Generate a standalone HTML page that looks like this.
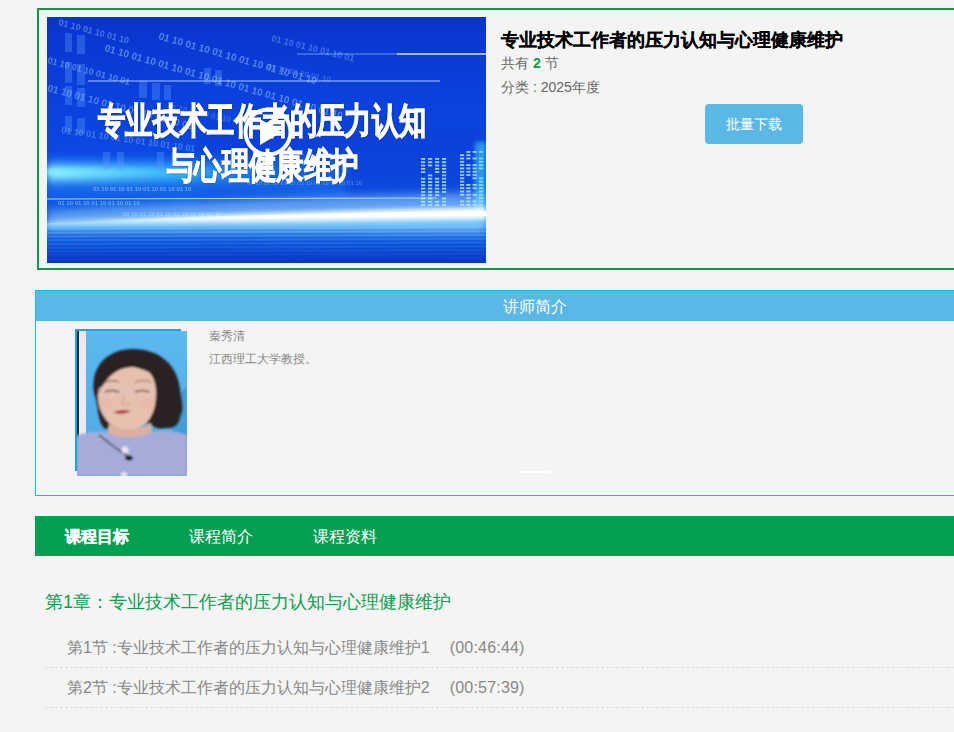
<!DOCTYPE html>
<html><head><meta charset="utf-8">
<style>
*{margin:0;padding:0;box-sizing:border-box}
html,body{width:954px;height:732px;overflow:hidden;background:#f4f4f4;font-family:"Liberation Sans",sans-serif}
.abs{position:absolute}
#topbox{position:absolute;left:37px;top:8px;width:1000px;height:262px;border:2px solid #0b9a4c}
#banner{position:absolute;left:47px;top:17px;width:439px;height:246px;background:#0a3fd8;overflow:hidden}
.title{position:absolute;left:501px;top:29px;font-size:18px;font-weight:bold;color:#000;-webkit-text-stroke:0.15px #000;white-space:nowrap;line-height:22px}
.cnt{position:absolute;left:501px;top:54px;font-size:14px;color:#666;white-space:nowrap;line-height:18px}
.cnt b{color:#0a9e50;font-size:14px}
.cat{position:absolute;left:501px;top:78px;font-size:14px;color:#666;white-space:nowrap;line-height:18px}
.btn{position:absolute;left:705px;top:104px;width:98px;height:40px;border-radius:4px;background:#5bb8e6;color:#fff;font-size:14px;line-height:40px;text-align:center}
#tbox{position:absolute;left:35px;top:290px;width:1000px;height:206px;border:1px solid #00c0f6}
#thead{position:absolute;left:0;top:0;width:100%;height:30px;background:#58b8e7;color:#fff;font-size:16px;line-height:32px;text-align:center}
.tname{position:absolute;left:209px;top:328px;font-size:12px;color:#888;line-height:16px}
.tdesc{position:absolute;left:209px;top:351px;font-size:12px;color:#888;line-height:16px}
#nav{position:absolute;left:35px;top:516px;width:1000px;height:40px;background:#03a052}
#nav span{position:absolute;top:1px;line-height:40px;font-size:16px;color:#fff}
.ch{position:absolute;left:45px;top:590px;font-size:18px;color:#0a9e50;line-height:24px;white-space:nowrap}
.sec{position:absolute;left:45px;width:1000px;height:40px;border-bottom:1px dashed #ddd;font-size:16px;color:#888;line-height:39px;padding-left:22px;white-space:nowrap}
.bt1,.bt2{position:absolute;color:#fff;font-weight:bold;font-size:36px;line-height:40px;white-space:nowrap;-webkit-text-stroke:1.2px #fff;text-shadow:0 0 3px rgba(0,20,90,0.6);transform-origin:0 0}
.bt1{left:51px;top:84px;transform:scaleX(0.76)}
.bt2{left:120px;top:129px;transform:scaleX(0.76)}
.play{position:absolute;left:194px;top:88px}
.tm{margin-left:20px;letter-spacing:0.2px}
</style></head><body>
<div id="topbox"></div>
<div id="banner"><svg width="439" height="246" viewBox="0 0 439 246">
<defs>
<linearGradient id="bg" x1="0" y1="0" x2="0" y2="1">
<stop offset="0" stop-color="#0a34cc"/><stop offset="0.3" stop-color="#0a40dc"/><stop offset="0.6" stop-color="#0b4ae2"/><stop offset="0.76" stop-color="#0d58e6"/><stop offset="1" stop-color="#0b3ac8"/>
</linearGradient>
<linearGradient id="low" x1="0" y1="0" x2="0" y2="1">
<stop offset="0" stop-color="#60c4ff"/><stop offset="0.3" stop-color="#3290f2"/><stop offset="0.65" stop-color="#1660e0"/><stop offset="1" stop-color="#0a34c0"/>
</linearGradient>
<linearGradient id="streak" x1="0" y1="0" x2="1" y2="0"><stop offset="0" stop-color="#d8ffff" stop-opacity="0.55"/><stop offset="0.45" stop-color="#fff" stop-opacity="0.9"/><stop offset="1" stop-color="#fff" stop-opacity="1"/></linearGradient>
<linearGradient id="cy" x1="0" y1="0" x2="1" y2="0"><stop offset="0" stop-color="#8ff4ff" stop-opacity="1"/><stop offset="0.55" stop-color="#40c8ff" stop-opacity="0.7"/><stop offset="1" stop-color="#2090ff" stop-opacity="0"/></linearGradient>
<filter id="b2" filterUnits="userSpaceOnUse" x="-50" y="-50" width="540" height="350"><feGaussianBlur stdDeviation="2"/></filter>
<filter id="b5" filterUnits="userSpaceOnUse" x="-50" y="-50" width="540" height="350"><feGaussianBlur stdDeviation="5"/></filter>
<filter id="b1" filterUnits="userSpaceOnUse" x="-50" y="-50" width="540" height="350"><feGaussianBlur stdDeviation="0.7"/></filter>
<filter id="b08" filterUnits="userSpaceOnUse" x="-50" y="-50" width="540" height="350"><feGaussianBlur stdDeviation="0.5"/></filter>
</defs>
<rect width="439" height="246" fill="url(#bg)"/>
<rect x="150" y="110" width="289" height="80" fill="#0838d0" opacity="0.35" filter="url(#b5)"/>
<rect x="0" y="140" width="300" height="40" fill="#1a78f0" opacity="0.5" filter="url(#b5)"/>
<rect x="0" y="148" width="260" height="16" fill="url(#cy)" filter="url(#b5)"/>
<rect x="0" y="152" width="200" height="6" fill="url(#cy)" opacity="0.8" filter="url(#b2)"/>
<g fill="#5a9cff" opacity="0.35" filter="url(#b08)">
<rect x="18" y="16" width="7" height="19"/><rect x="30" y="18" width="8" height="19"/>
<rect x="18" y="45" width="7" height="21"/><rect x="30" y="47" width="8" height="21"/>
<rect x="18" y="69" width="7" height="19"/><rect x="30" y="71" width="8" height="19"/>
<rect x="18" y="99" width="7" height="16"/><rect x="30" y="101" width="8" height="16"/>
<rect x="92" y="64" width="8" height="17"/><rect x="105" y="66" width="8" height="17"/><rect x="117" y="68" width="7" height="15"/>
<rect x="157" y="51" width="7" height="16"/><rect x="168" y="53" width="7" height="16"/>
<rect x="56" y="135" width="7" height="18"/><rect x="70" y="135" width="7" height="18"/><rect x="110" y="135" width="7" height="18"/><rect x="124" y="135" width="7" height="18"/>
</g>
<g fill="#9ccaff" font-family="Liberation Sans" font-weight="bold" filter="url(#b1)" opacity="0.85"><text x="11" y="8" transform="rotate(15 11 8)" font-size="9" opacity="0.5">01 10 01 10 01 10</text><text x="111" y="22" transform="rotate(16 111 22)" font-size="10" opacity="0.6">01 10 01 10 01 10 01 10 01 10 01 10</text><text x="57" y="34" transform="rotate(16 57 34)" font-size="10" opacity="0.6">01 10 01 10 01 10 01 10 01 10 01 10 01 10 01 10 01 10</text><text x="0" y="46" transform="rotate(15 0 46)" font-size="9" opacity="0.55">01 10 01 10 01 10 01 </text><text x="0" y="74" transform="rotate(15 0 74)" font-size="10" opacity="0.55">01 10 01 10 01 10 01 10 01 10 01 </text><text x="14" y="116" transform="rotate(8 14 116)" font-size="9" opacity="0.45">01 10 01 10 01 10 01 10 01 10 01 </text><text x="224" y="24" transform="rotate(14 224 24)" font-size="9" opacity="0.45">01 10 01 10 01 10 01 </text><text x="220" y="52" transform="rotate(12 220 52)" font-size="8" opacity="0.35">01 10 01 10 01 10</text><text x="120" y="92" transform="rotate(12 120 92)" font-size="8" opacity="0.35">01 10 01 10 01 10 01 10 01 10</text></g>
<g fill="#bfe0ff" font-family="Liberation Sans" font-weight="bold" filter="url(#b08)"><text x="46" y="174" font-size="6" opacity="0.5">01 10 01 10 01 10 01 10 01 10 01 10</text><text x="11" y="188" font-size="6" opacity="0.5">01 10 01 10 01 10 01 10 01 10</text><text x="76" y="199" font-size="6" opacity="0.45">01 10 01 10 01 10 01 10 01 10 01 10</text><text x="0" y="217" font-size="6" opacity="0.45">01 10 01 10 01 10 01 10 01 10</text><text x="50" y="233" font-size="6" opacity="0.4">01 10 01 10 01 10 01 10 01 10</text><text x="200" y="168" font-size="6" opacity="0.3">01 10 01 10 01 10 01 10 01 10 01 10 01 10</text></g>
<line x1="0" y1="182" x2="390" y2="181" stroke="#d8f4ff" stroke-width="1.2" opacity="0.8" filter="url(#b08)"/>
<line x1="41" y1="64" x2="393" y2="64" stroke="#e0f6ff" stroke-width="1.2" opacity="0.75" filter="url(#b08)"/>
<line x1="350" y1="37" x2="439" y2="37" stroke="#f0fbff" stroke-width="1.5" opacity="0.9" filter="url(#b1)"/>
<line x1="250" y1="37" x2="350" y2="37" stroke="#a0d8ff" stroke-width="1" opacity="0.6" filter="url(#b1)"/>
<g fill="#b8eaff" opacity="0.85" filter="url(#b08)"><rect x="374.0" y="141.0" width="4.2" height="1.8"/><rect x="381.0" y="141.0" width="4.2" height="1.8"/><rect x="388.0" y="141.0" width="4.2" height="1.8"/><rect x="395.0" y="141.0" width="4.2" height="1.8"/><rect x="374.0" y="144.3" width="4.2" height="1.8"/><rect x="381.0" y="144.3" width="4.2" height="1.8"/><rect x="388.0" y="144.3" width="4.2" height="1.8"/><rect x="395.0" y="144.3" width="4.2" height="1.8"/><rect x="374.0" y="147.6" width="4.2" height="1.8"/><rect x="381.0" y="147.6" width="4.2" height="1.8"/><rect x="388.0" y="147.6" width="4.2" height="1.8"/><rect x="395.0" y="147.6" width="4.2" height="1.8"/><rect x="374.0" y="150.9" width="4.2" height="1.8"/><rect x="388.0" y="150.9" width="4.2" height="1.8"/><rect x="395.0" y="150.9" width="4.2" height="1.8"/><rect x="374.0" y="154.2" width="4.2" height="1.8"/><rect x="388.0" y="154.2" width="4.2" height="1.8"/><rect x="395.0" y="154.2" width="4.2" height="1.8"/><rect x="381.0" y="157.5" width="4.2" height="1.8"/><rect x="395.0" y="157.5" width="4.2" height="1.8"/><rect x="374.0" y="160.8" width="4.2" height="1.8"/><rect x="381.0" y="160.8" width="4.2" height="1.8"/><rect x="388.0" y="160.8" width="4.2" height="1.8"/><rect x="395.0" y="160.8" width="4.2" height="1.8"/><rect x="374.0" y="164.1" width="4.2" height="1.8"/><rect x="381.0" y="164.1" width="4.2" height="1.8"/><rect x="388.0" y="164.1" width="4.2" height="1.8"/><rect x="395.0" y="164.1" width="4.2" height="1.8"/><rect x="374.0" y="167.4" width="4.2" height="1.8"/><rect x="381.0" y="167.4" width="4.2" height="1.8"/><rect x="388.0" y="167.4" width="4.2" height="1.8"/><rect x="395.0" y="167.4" width="4.2" height="1.8"/><rect x="374.0" y="170.7" width="4.2" height="1.8"/><rect x="381.0" y="170.7" width="4.2" height="1.8"/><rect x="388.0" y="170.7" width="4.2" height="1.8"/><rect x="395.0" y="170.7" width="4.2" height="1.8"/><rect x="374.0" y="174.0" width="4.2" height="1.8"/><rect x="381.0" y="174.0" width="4.2" height="1.8"/><rect x="388.0" y="174.0" width="4.2" height="1.8"/><rect x="395.0" y="174.0" width="4.2" height="1.8"/><rect x="374.0" y="177.3" width="4.2" height="1.8"/><rect x="381.0" y="177.3" width="4.2" height="1.8"/><rect x="388.0" y="177.3" width="4.2" height="1.8"/><rect x="374.0" y="180.6" width="4.2" height="1.8"/><rect x="381.0" y="180.6" width="4.2" height="1.8"/><rect x="395.0" y="180.6" width="4.2" height="1.8"/><rect x="374.0" y="183.9" width="4.2" height="1.8"/><rect x="381.0" y="183.9" width="4.2" height="1.8"/><rect x="388.0" y="183.9" width="4.2" height="1.8"/><rect x="395.0" y="183.9" width="4.2" height="1.8"/><rect x="374.0" y="187.2" width="4.2" height="1.8"/><rect x="381.0" y="187.2" width="4.2" height="1.8"/><rect x="388.0" y="187.2" width="4.2" height="1.8"/><rect x="395.0" y="187.2" width="4.2" height="1.8"/><rect x="419.3" y="134.0" width="4.2" height="1.8"/><rect x="425.6" y="134.0" width="4.2" height="1.8"/><rect x="431.9" y="134.0" width="4.2" height="1.8"/><rect x="413.0" y="137.3" width="4.2" height="1.8"/><rect x="419.3" y="137.3" width="4.2" height="1.8"/><rect x="413.0" y="140.6" width="4.2" height="1.8"/><rect x="419.3" y="140.6" width="4.2" height="1.8"/><rect x="425.6" y="140.6" width="4.2" height="1.8"/><rect x="431.9" y="140.6" width="4.2" height="1.8"/><rect x="413.0" y="143.9" width="4.2" height="1.8"/><rect x="431.9" y="143.9" width="4.2" height="1.8"/><rect x="413.0" y="147.2" width="4.2" height="1.8"/><rect x="419.3" y="147.2" width="4.2" height="1.8"/><rect x="425.6" y="147.2" width="4.2" height="1.8"/><rect x="431.9" y="147.2" width="4.2" height="1.8"/><rect x="413.0" y="150.5" width="4.2" height="1.8"/><rect x="419.3" y="150.5" width="4.2" height="1.8"/><rect x="425.6" y="150.5" width="4.2" height="1.8"/><rect x="431.9" y="150.5" width="4.2" height="1.8"/><rect x="413.0" y="153.8" width="4.2" height="1.8"/><rect x="419.3" y="153.8" width="4.2" height="1.8"/><rect x="425.6" y="153.8" width="4.2" height="1.8"/><rect x="413.0" y="157.1" width="4.2" height="1.8"/><rect x="419.3" y="157.1" width="4.2" height="1.8"/><rect x="425.6" y="157.1" width="4.2" height="1.8"/><rect x="413.0" y="160.4" width="4.2" height="1.8"/><rect x="425.6" y="160.4" width="4.2" height="1.8"/><rect x="431.9" y="160.4" width="4.2" height="1.8"/><rect x="413.0" y="163.7" width="4.2" height="1.8"/><rect x="431.9" y="163.7" width="4.2" height="1.8"/><rect x="413.0" y="167.0" width="4.2" height="1.8"/><rect x="419.3" y="167.0" width="4.2" height="1.8"/><rect x="425.6" y="167.0" width="4.2" height="1.8"/><rect x="431.9" y="167.0" width="4.2" height="1.8"/><rect x="413.0" y="170.3" width="4.2" height="1.8"/><rect x="419.3" y="170.3" width="4.2" height="1.8"/><rect x="425.6" y="170.3" width="4.2" height="1.8"/><rect x="431.9" y="170.3" width="4.2" height="1.8"/><rect x="413.0" y="173.6" width="4.2" height="1.8"/><rect x="419.3" y="173.6" width="4.2" height="1.8"/><rect x="431.9" y="173.6" width="4.2" height="1.8"/><rect x="413.0" y="176.9" width="4.2" height="1.8"/><rect x="419.3" y="176.9" width="4.2" height="1.8"/><rect x="425.6" y="176.9" width="4.2" height="1.8"/><rect x="431.9" y="176.9" width="4.2" height="1.8"/><rect x="419.3" y="180.2" width="4.2" height="1.8"/><rect x="431.9" y="180.2" width="4.2" height="1.8"/><rect x="413.0" y="183.5" width="4.2" height="1.8"/><rect x="419.3" y="183.5" width="4.2" height="1.8"/><rect x="425.6" y="183.5" width="4.2" height="1.8"/><rect x="431.9" y="183.5" width="4.2" height="1.8"/><rect x="413.0" y="186.8" width="4.2" height="1.8"/><rect x="419.3" y="186.8" width="4.2" height="1.8"/><rect x="425.6" y="186.8" width="4.2" height="1.8"/><rect x="431.9" y="186.8" width="4.2" height="1.8"/></g>

<rect x="428" y="125" width="11" height="75" fill="#50e8ff" opacity="0.5" filter="url(#b2)"/>
<path d="M0 206 Q220 198 439 196 L439 246 L0 246Z" fill="url(#low)"/>
<g stroke="#0838c8" stroke-width="1.5" opacity="0.5"><path d="M0 214.0 L439 212.5"/><path d="M0 217.8 L439 216.2"/><path d="M0 221.5 L439 220.0"/><path d="M0 225.2 L439 223.8"/><path d="M0 229.0 L439 227.5"/><path d="M0 232.8 L439 231.2"/><path d="M0 236.5 L439 235.0"/><path d="M0 240.2 L439 238.8"/><path d="M0 244.0 L439 242.5"/></g>
<path d="M0 194 Q220 180 439 176 L439 216 Q220 214 0 214Z" fill="#a8e4ff" opacity="0.55" filter="url(#b5)"/>
<path d="M0 204 Q220 194 439 190 L439 202 Q220 205 0 208Z" fill="url(#streak)" opacity="0.95" filter="url(#b2)"/>
<linearGradient id="core" x1="0" y1="0" x2="1" y2="0"><stop offset="0" stop-color="#fff" stop-opacity="0"/><stop offset="0.5" stop-color="#fff" stop-opacity="0.9"/><stop offset="1" stop-color="#fff"/></linearGradient><path d="M40 203 Q260 196 439 194 L439 199 Q260 200 40 205Z" fill="url(#core)" filter="url(#b1)"/>
</svg>
<div class="bt1">专业技术工作者的压力认知</div>
<div class="bt2">与心理健康维护</div>
<svg class="play" width="54" height="54" viewBox="0 0 54 54"><circle cx="27" cy="27" r="22.5" stroke="#fff" stroke-width="4" fill="none"/><path d="M19 14 L41 27 L19 40Z" fill="#fff"/></svg>
</div>
<div class="title">专业技术工作者的压力认知与心理健康维护</div>
<div class="cnt">共有 <b>2</b> 节</div>
<div class="cat">分类 : 2025年度</div>
<div class="btn">批量下载</div>
<div id="tbox"><div id="thead">讲师简介</div></div>
<div class="abs" style="left:75px;top:329px;width:106px;height:2px;background:#12a8dc"></div>
<div class="abs" style="left:75px;top:329px;width:2px;height:142px;background:#12a8dc"></div>
<svg class="abs" style="left:77px;top:331px" width="110" height="145" viewBox="0 0 110 145">
<defs>
<linearGradient id="pbg" x1="0" y1="0" x2="0" y2="1"><stop offset="0" stop-color="#5cbaf0"/><stop offset="1" stop-color="#4aa8e6"/></linearGradient>
<filter id="pb"><feGaussianBlur stdDeviation="0.8"/></filter>
<filter id="pb2"><feGaussianBlur stdDeviation="1.6"/></filter>
</defs>
<rect width="110" height="145" fill="url(#pbg)"/>
<path d="M95 70 L110 55 L110 110 L95 110Z" fill="#3c98d8" opacity="0.8" filter="url(#pb)"/>
<rect x="0" y="0" width="2" height="106" fill="#1a2a4a"/>
<rect x="2" y="0" width="7" height="106" fill="#f0e8f0"/>
<g filter="url(#pb)">
<path d="M17 62 C13 36 30 18 56 18 C84 18 101 36 103 58 C104 70 108 78 103 85 C103 93 97 98 89 97 C82 99 76 96 72 92 L40 94 C36 99 30 100 26 96 C20 88 22 76 17 62Z" fill="#2c2024"/>
<path d="M21 64 C21 44 34 33 52 33 C70 33 79 45 79 62 C79 84 70 98 51 99 C33 99 21 84 21 64Z" fill="#e8c0ae"/>
<path d="M18 62 C18 36 40 22 60 26 C72 28 82 36 82 48 C76 42 66 38 56 36 C42 36 30 44 22 62Z" fill="#2c2024"/>
<path d="M32 92 C40 100 62 100 74 92 L76 106 L30 106Z" fill="#dcb0a0"/>
<path d="M0 104 C14 100 26 100 32 102 C40 108 62 108 72 102 C84 98 100 100 110 104 L110 145 L0 145Z" fill="#a6acda"/>
<g fill="none" stroke="#d8c6cc" stroke-width="1.2"><ellipse cx="35" cy="60" rx="13" ry="6"/><ellipse cx="65" cy="60" rx="13" ry="6"/></g>
<path d="M36 81 Q45 85 54 80 Q45 78 36 81Z" fill="#9c2a3a"/>
<path d="M28 61 Q35 58 42 61" stroke="#5a3a3a" stroke-width="1.6" fill="none"/>
<path d="M58 61 Q65 58 72 61" stroke="#5a3a3a" stroke-width="1.6" fill="none"/>
<path d="M26 52 Q34 48 42 51 M58 51 Q66 48 74 51" stroke="#6a4a48" stroke-width="1.2" fill="none" opacity="0.8"/>
<path d="M47 64 L45 73 Q49 75 53 73" stroke="#c89888" stroke-width="1" fill="none"/>
<ellipse cx="30" cy="72" rx="6" ry="5" fill="#e8a8a0" opacity="0.35"/><ellipse cx="70" cy="72" rx="6" ry="5" fill="#e8a8a0" opacity="0.35"/>
<path d="M22 104 C32 112 42 120 52 126" stroke="#2a2030" stroke-width="1.3" fill="none"/>
<circle cx="48" cy="119" r="3.5" fill="#ece4ec"/>
<ellipse cx="52" cy="127" rx="4" ry="2.5" fill="#1a1a22"/>
<circle cx="47" cy="144" r="3" fill="#ece4ec"/>
</g>
</svg>
<div class="tname">秦秀清</div>
<div class="tdesc">江西理工大学教授。</div>
<div class="abs" style="left:520px;top:471px;width:30px;height:2px;background:#fff"></div>
<div id="nav"><span style="left:30px;font-weight:bold;-webkit-text-stroke:0.4px #fff">课程目标</span><span style="left:154px">课程简介</span><span style="left:278px">课程资料</span></div>
<div class="ch">第1章：专业技术工作者的压力认知与心理健康维护</div>
<div class="sec" style="top:628px">第1节 :专业技术工作者的压力认知与心理健康维护1<span class="tm">(00:46:44)</span></div>
<div class="sec" style="top:668px">第2节 :专业技术工作者的压力认知与心理健康维护2<span class="tm">(00:57:39)</span></div>
</body></html>
